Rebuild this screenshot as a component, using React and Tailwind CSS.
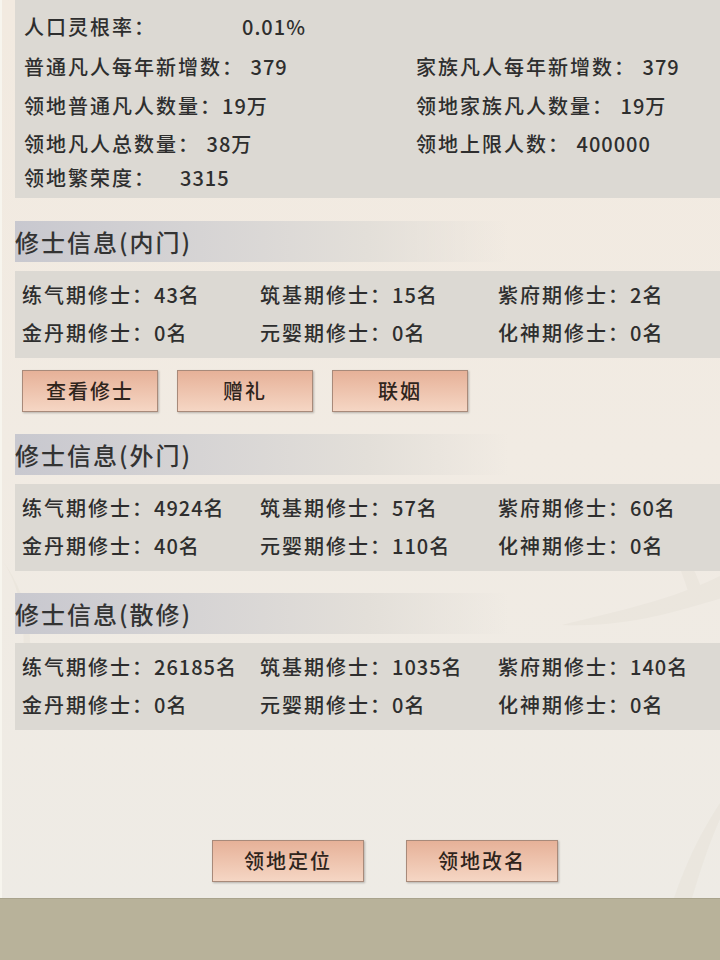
const font = { fontFamily: '"Noto Sans CJK SC", "Noto Sans", sans-serif' };

const sections = [
  {
    title: '修士信息(内门)',
    rows: [
      [['练气期修士：', '43名'], ['筑基期修士：', '15名'], ['紫府期修士：', '2名']],
      [['金丹期修士：', '0名'], ['元婴期修士：', '0名'], ['化神期修士：', '0名']],
    ],
    actions: ['查看修士', '赠礼', '联姻'],
  },
  {
    title: '修士信息(外门)',
    rows: [
      [['练气期修士：', '4924名'], ['筑基期修士：', '57名'], ['紫府期修士：', '60名']],
      [['金丹期修士：', '40名'], ['元婴期修士：', '110名'], ['化神期修士：', '0名']],
    ],
  },
  {
    title: '修士信息(散修)',
    rows: [
      [['练气期修士：', '26185名'], ['筑基期修士：', '1035名'], ['紫府期修士：', '140名']],
      [['金丹期修士：', '0名'], ['元婴期修士：', '0名'], ['化神期修士：', '0名']],
    ],
  },
];

function WoodButton({ label, className }) {
  return (
    <button
      className={
        'flex items-center justify-center border border-[#a88a7a] bg-gradient-to-b from-[#e6b198] to-[#f5d6c4] text-[20px] font-medium tracking-[2px] text-[#2f241c] shadow-[1px_1px_2px_rgba(0,0,0,0.25)] ' +
        className
      }
    >
      {label}
    </button>
  );
}

function Num({ children, className = '' }) {
  return <span className={'tracking-[1px] ' + className}>{children}</span>;
}

function Section({ data, first }) {
  return (
    <div className={first ? 'mt-[23px]' : 'mt-[22px]'}>
      <div className="flex h-[41px] items-center bg-gradient-to-r from-[#c8c8cf] via-[#e3dfd9] via-50% to-transparent to-70% text-[24px] tracking-[2px] text-[#333]">
        {data.title}
      </div>
      <div className="mt-[9px] bg-[#dcd9d3] pt-[5px] pb-[6px] pl-[7px]">
        {data.rows.map((row, i) => (
          <div key={i} className="flex h-[38px] items-center">
            {row.map(([k, v]) => (
              <div key={k} className="w-[238px] shrink-0 whitespace-nowrap">
                {k}
                <Num>{v}</Num>
              </div>
            ))}
          </div>
        ))}
      </div>
      {data.actions && (
        <div className="mt-[12px] flex gap-[19px] pl-[7px]">
          {data.actions.map((a) => (
            <WoodButton key={a} label={a} className="h-[42px] w-[136px]" />
          ))}
        </div>
      )}
    </div>
  );
}

export default function App() {
  return (
    <div style={font} className="flex h-[960px] w-[720px] flex-col overflow-hidden bg-[#b8b29a]">
      <div className="relative flex h-[898px] flex-col border-l-[2px] border-[#f7f5ee] bg-gradient-to-b from-[#f2eae0] via-[#f1ebe3] to-[#eeebe5] pl-[13px] text-[20px] font-medium tracking-[2px] text-[#2e2e2e] shadow-[0_1px_0_#a9a38c]">
        {/* faint bamboo leaves in the background */}
        <svg className="pointer-events-none absolute inset-0" width="720" height="898" viewBox="0 0 720 898">
          <g fill="#d6d0c4" opacity="0.18">
            <path d="M720 575 C670 600 620 610 560 625 C625 628 680 610 720 598 Z" />
            <path d="M700 590 C690 560 675 540 655 525 C672 550 682 575 690 605 Z" />
            <path d="M720 800 C700 830 685 860 672 898 L690 898 C700 865 710 835 720 815 Z" />
            <path d="M0 560 C22 590 26 640 18 700 C36 650 30 600 0 560 Z" />
          </g>
        </svg>

        <div className="relative">
          <div className="bg-[#dcd9d3] pt-[7px] pb-[5px] pl-[9px]">
            <div className="flex h-[40px] items-center">
              <span>人口灵根率：</span>
              <Num className="ml-[86px]">0.01%</Num>
            </div>
            <div className="flex h-[40px] items-center">
              <span className="w-[392px] shrink-0">普通凡人每年新增数： <Num>379</Num></span>
              <span>家族凡人每年新增数： <Num>379</Num></span>
            </div>
            <div className="flex h-[37px] items-center">
              <span className="w-[392px] shrink-0">领地普通凡人数量：<Num>19万</Num></span>
              <span>领地家族凡人数量： <Num>19万</Num></span>
            </div>
            <div className="flex h-[39px] items-center">
              <span className="w-[392px] shrink-0">领地凡人总数量： <Num>38万</Num></span>
              <span>领地上限人数： <Num>400000</Num></span>
            </div>
            <div className="flex h-[30px] items-center">
              <span>领地繁荣度：</span>
              <Num className="ml-[24px]">3315</Num>
            </div>
          </div>

          {sections.map((s, i) => (
            <Section key={s.title} data={s} first={i === 0} />
          ))}
        </div>

        <div className="relative mt-auto mb-[16px] flex gap-[42px] pl-[197px]">
          <WoodButton label="领地定位" className="h-[42px] w-[152px]" />
          <WoodButton label="领地改名" className="h-[42px] w-[152px]" />
        </div>
      </div>
    </div>
  );
}
